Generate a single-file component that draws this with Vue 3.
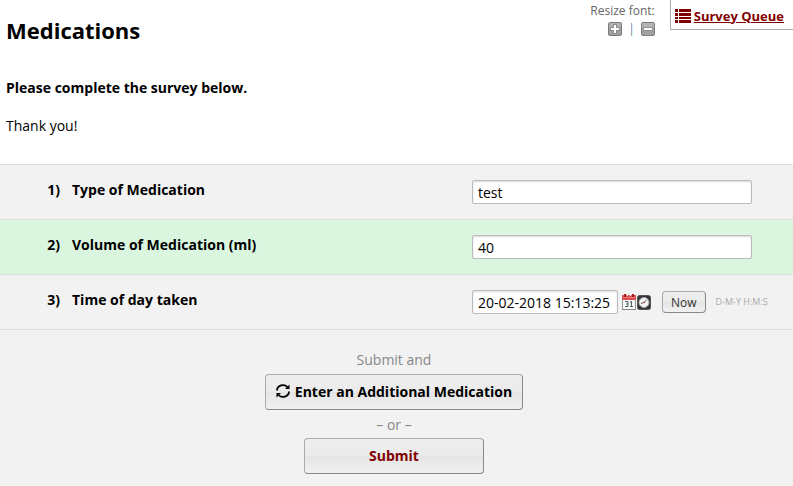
<script setup>
import { ref } from 'vue'

const fontSize = ref(14)

const fields = ref([
  { id: 'med_type', label: 'Type of Medication', value: 'test' },
  { id: 'med_volume', label: 'Volume of Medication (ml)', value: '40' },
  { id: 'med_time', label: 'Time of day taken', value: '20-02-2018 15:13:25', datetime: true }
])

const activeField = ref('med_volume')

const resizeFont = (step) => {
  fontSize.value = Math.min(20, Math.max(10, fontSize.value + step))
}

const setNow = (field) => {
  const d = new Date()
  const pad = (n) => String(n).padStart(2, '0')
  const date = [pad(d.getDate()), pad(d.getMonth() + 1), d.getFullYear()].join('-')
  const time = [d.getHours(), d.getMinutes(), d.getSeconds()].map(pad).join(':')
  field.value = `${date} ${time}`
}
</script>

<template>
  <form class="survey" :style="{ fontSize: fontSize + 'px' }" @submit.prevent>
    <header class="survey-header">
      <h1 class="title">Medications</h1>
      <div class="font-resize">
        <span>Resize font:</span>
        <div class="resize-buttons">
          <button type="button" class="icon-btn" aria-label="Increase font" @click="resizeFont(1)">
            <svg width="14" height="14" viewBox="0 0 14 14">
              <rect x="0.5" y="0.5" width="13" height="13" rx="1.5" fill="#a0a0a0" stroke="#7c7c7c" />
              <path d="M1 1h12v5h-12z" fill="#b2b2b2" />
              <path d="M5 2h4v3h3v4h-3v3h-4v-3h-3v-4h3z" fill="#8c9196" />
              <path d="M6 3h2v3h3v2h-3v3h-2v-3h-3v-2h3z" fill="#fff" />
            </svg>
          </button>
          <span class="divider">|</span>
          <button type="button" class="icon-btn" aria-label="Decrease font" @click="resizeFont(-1)">
            <svg width="14" height="14" viewBox="0 0 14 14">
              <rect x="0.5" y="0.5" width="13" height="13" rx="1.5" fill="#a0a0a0" stroke="#7c7c7c" />
              <path d="M1 1h12v5h-12z" fill="#b2b2b2" />
              <path d="M2 5h10v4h-10z" fill="#8c9196" />
              <path d="M3 6h8v2h-8z" fill="#fff" />
            </svg>
          </button>
        </div>
      </div>
      <div class="queue">
        <svg width="16" height="14" viewBox="0 0 16 14" fill="#800000">
          <path d="M0 0h3v3h-3zM0 4h3v3h-3zM0 8h3v2h-3zM0 11h3v3h-3z" />
          <path d="M4 0h12v3h-12zM4 4h12v3h-12zM4 8h12v2h-12zM4 11h12v3h-12z" />
        </svg>
        <a href="#">Survey Queue</a>
      </div>
    </header>

    <div class="instructions">
      <p><strong>Please complete the survey below.</strong></p>
      <p>Thank you!</p>
    </div>

    <div
      v-for="(field, index) in fields"
      :key="field.id"
      class="question"
      :class="{ active: field.id === activeField }"
    >
      <span class="number">{{ index + 1 }})</span>
      <label class="label" :for="field.id">{{ field.label }}</label>
      <div class="control">
        <input
          :id="field.id"
          v-model="field.value"
          type="text"
          class="text-input"
          :class="{ short: field.datetime }"
          @focus="activeField = field.id"
        />
        <template v-if="field.datetime">
          <button type="button" class="icon-btn picker" aria-label="Choose date and time">
            <svg width="30" height="16" viewBox="0 0 30 16">
              <rect x="0.5" y="1.5" width="13" height="14" fill="#f8fafa" stroke="#8d9692" />
              <path d="M0 1h14v5h-14z" fill="#dc4b4b" />
              <path d="M1 3h12v1h-12z" fill="#ef7777" />
              <path d="M2 0h2v3h-2zM10 0h2v3h-2z" fill="#a52222" />
              <path d="M5 1h1v1h-1zM8 1h1v1h-1z" fill="#fff" />
              <path d="M3 7.500h3v5h-3M4 10h2M8 8.500l1.500-1v5M8 12.500h3" fill="none" stroke="#4a6262" />
              <path d="M0 15h14v1h-14z" fill="#818a86" />
              <rect x="15.500" y="1.500" width="13" height="14" rx="2" fill="#333" stroke="#555" />
              <circle cx="22" cy="8.500" r="5" fill="#f3f3f3" stroke="#aaa" />
              <path d="M22 8.500l2.500-2.500M22 8.500l-3 1" stroke="#555" />
              <path d="M21 8h2v1h-2z" fill="#d33" />
            </svg>
          </button>
          <button type="button" class="btn now-btn" @click="setNow(field)">Now</button>
          <span class="format">D-M-Y H:M:S</span>
        </template>
      </div>
    </div>

    <footer class="submit-area">
      <span>Submit and</span>
      <button type="submit" class="btn repeat-btn">
        <svg width="14" height="14" viewBox="0 0 14 14">
          <path d="M1 6.500a6 5.500 0 0 1 10.500-3.500M13 7.500a6 5.500 0 0 1-10.500 3.500" fill="none" stroke="#000" stroke-width="1.800" />
          <path d="M13.500 0.500v4.500h-4.500zM0.500 13.500v-4.500h4.500z" fill="#000" />
        </svg>
        <span>Enter an Additional Medication</span>
      </button>
      <span>– or –</span>
      <button type="submit" class="btn submit-btn">Submit</button>
    </footer>
  </form>
</template>

<style>
body {
  background: #f2f2f2;
}
</style>

<style scoped>
.survey {
  font-family: "Open Sans", sans-serif;
  line-height: 20px;
  color: #000;
}

.survey-header {
  display: flex;
  align-items: flex-start;
  background: #fff;
}

.title {
  flex: 1;
  margin: 0;
  padding: 15px 6px 1px;
  font-size: 22px;
  line-height: 30px;
  font-weight: 700;
}

.font-resize {
  padding-top: 2px;
  font-size: 12px;
  line-height: 18px;
  color: #666;
  text-align: right;
}

.resize-buttons {
  display: flex;
  align-items: center;
  justify-content: flex-end;
  gap: 6px;
}

.divider {
  color: #6b83a8;
}

.icon-btn {
  display: flex;
  padding: 0;
  border: none;
  background: none;
  cursor: pointer;
}

.queue {
  display: flex;
  align-items: center;
  gap: 3px;
  margin-left: 15px;
  padding: 2px 9px 0 4px;
  height: 27px;
  border-left: 1px solid #aaa;
  border-bottom: 1px solid #aaa;
  font-size: 13px;
}

.queue a {
  color: #800000;
  font-weight: 700;
}

.instructions {
  padding: 32px 6px 28px;
  background: #fff;
}

.instructions p {
  margin: 0 0 18px;
}

.instructions p:last-child {
  margin-bottom: 0;
}

strong {
  font-weight: 700;
}

.question {
  display: grid;
  grid-template-columns: 60px minmax(0, 1fr) 321px;
  padding: 15px 0;
  border-top: 1px solid #ddd;
}

.question.active {
  background: #daf6df;
}

.number,
.label {
  font-weight: 700;
}

.number {
  text-align: right;
}

.label {
  padding-left: 12px;
}

.control {
  display: flex;
  align-items: center;
}

.text-input {
  box-sizing: border-box;
  width: 280px;
  height: 24px;
  padding: 1px 5px 0;
  border: 1px solid #bbb;
  border-radius: 2px;
  box-shadow: inset 0 1px 2px #ddd;
  background: #fff;
  font-family: inherit;
  font-size: inherit;
  color: #000;
}

.text-input.short {
  width: 146px;
}

.picker {
  margin-left: 4px;
}

.btn {
  border: 1px solid #aaa;
  border-right-color: #888;
  border-bottom-color: #888;
  border-radius: 4px;
  background: linear-gradient(#eee 0%, #ebebeb 50%, #e4e4e4 50%, #f1f1f1 100%);
  font-family: inherit;
  cursor: pointer;
}

.now-btn {
  margin-left: 10px;
  padding: 0 8px;
  height: 22px;
  font-size: 12px;
  color: #333;
}

.format {
  margin-left: 10px;
  font-size: 9px;
  color: #aaa;
  white-space: nowrap;
}

.submit-area {
  display: flex;
  flex-direction: column;
  align-items: center;
  padding: 20px 5px 12px 0;
  border-top: 1px solid #ddd;
  color: #888;
}

.repeat-btn,
.submit-btn {
  height: 36px;
  padding: 0 10px 2px;
  font-size: inherit;
  font-weight: 700;
}

.repeat-btn {
  display: flex;
  align-items: center;
  gap: 5px;
  margin: 4px 0 5px;
  color: #000;
}

.submit-btn {
  margin-top: 3px;
  width: 180px;
  color: #800000;
}
</style>
